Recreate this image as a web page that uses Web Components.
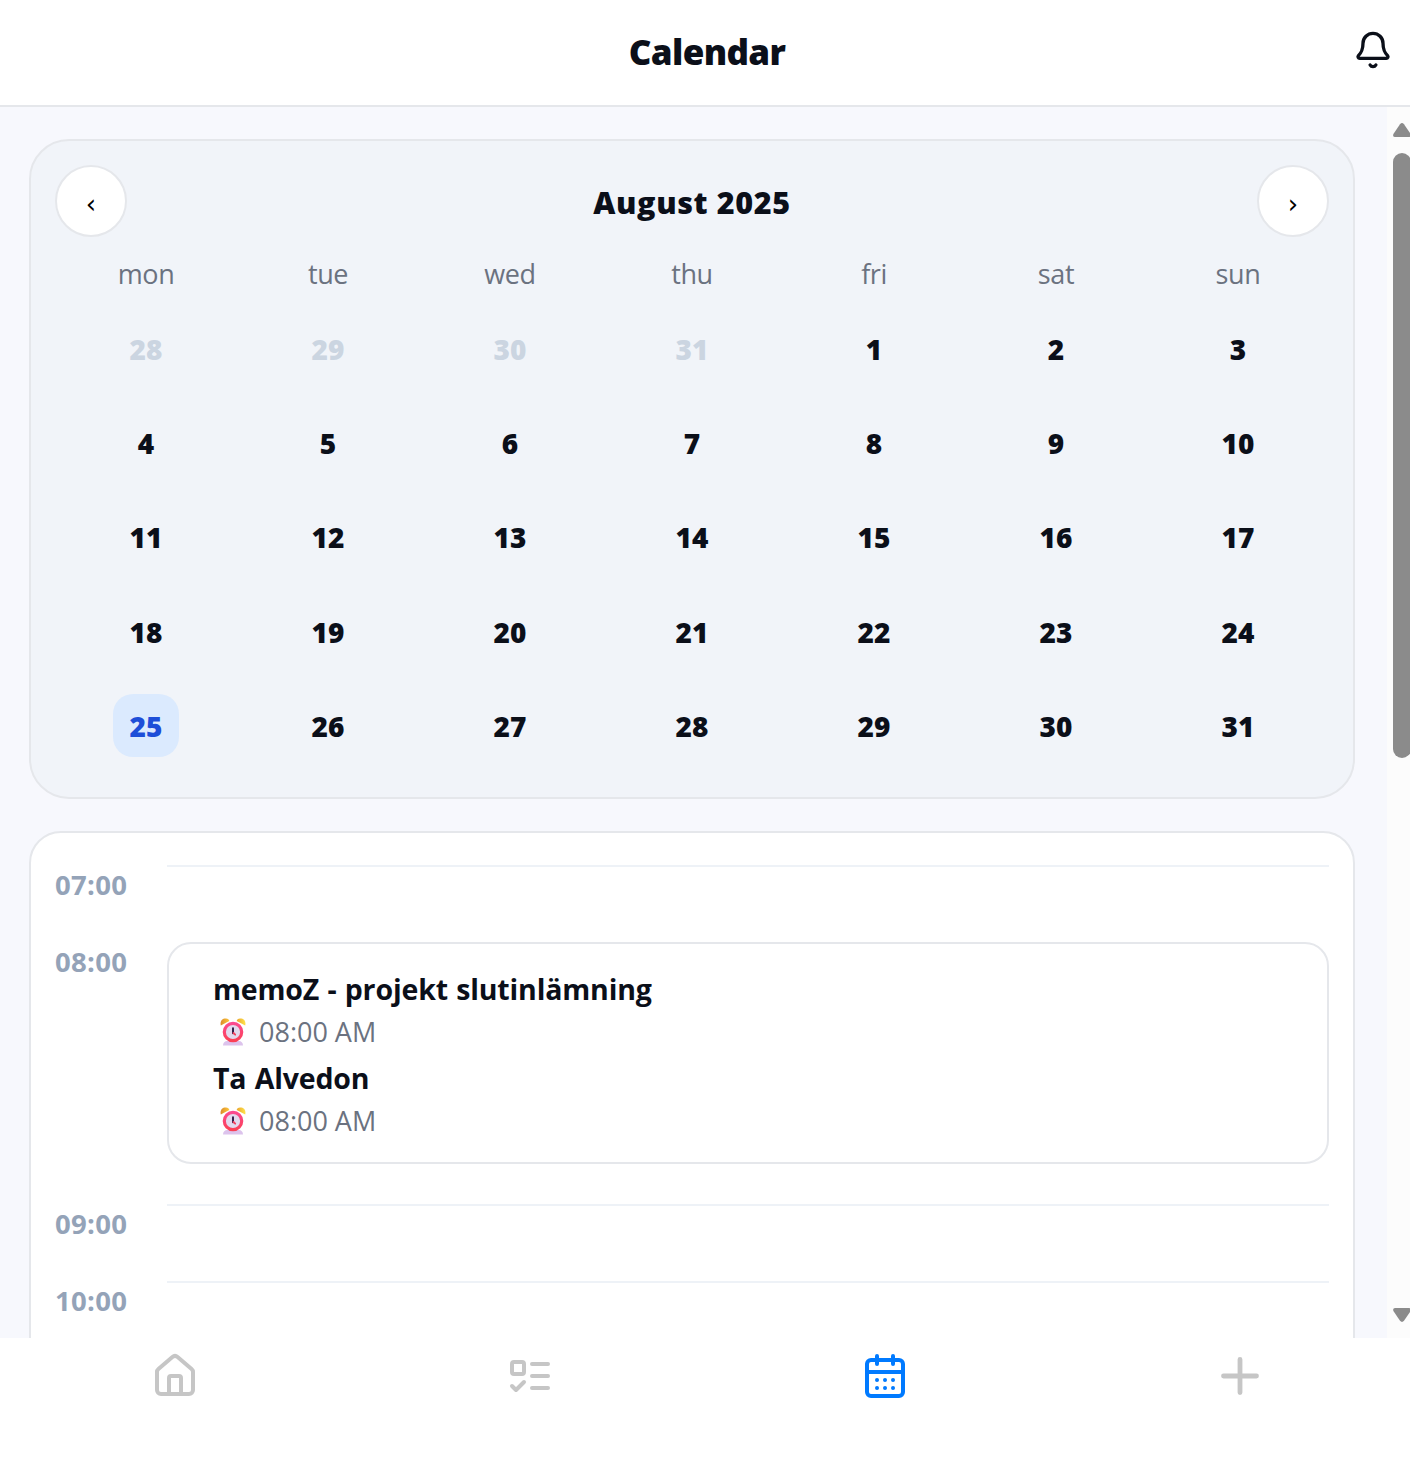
<!DOCTYPE html>
<html lang="en">
<head>
<meta charset="utf-8">
<title>Calendar</title>
<style>
html,body{margin:0;height:100%;overflow:hidden;background:#fff}
body{font-family:"Open Sans","Noto Sans",sans-serif;color:#0b0f19}
</style>
</head>
<body>
<calendar-app></calendar-app>
<script>
const define = (name, html) => customElements.define(name, class extends HTMLElement {
  connectedCallback() {
    if (this.shadowRoot) return;
    const root = this.attachShadow({ mode: 'open' });
    root.innerHTML = typeof html === 'function' ? html(this) : html;
  }
});

const ICONS = {
  bell: '<path d="M10.268 21a2 2 0 0 0 3.464 0"/><path d="M3.262 15.326A1 1 0 0 0 4 17h16a1 1 0 0 0 .74-1.673C19.41 13.956 18 12.499 18 8A6 6 0 0 0 6 8c0 4.499-1.411 5.956-2.738 7.326"/>',
  home: '<path d="M15 21v-8a1 1 0 0 0-1-1h-4a1 1 0 0 0-1 1v8"/><path d="M3 10a2 2 0 0 1 .709-1.528l7-5.999a2 2 0 0 1 2.582 0l7 5.999A2 2 0 0 1 21 10v9a2 2 0 0 1-2 2H5a2 2 0 0 1-2-2z"/>',
  todo: '<rect x="3" y="5" width="6" height="6" rx="1"/><path d="m3 17 2 2 4-4M13 6h8M13 12h8M13 18h8"/>',
  calendar: '<path d="M8 2v4M16 2v4"/><rect x="3" y="4" width="18" height="18" rx="2"/><path d="M3 10h18M8 14h.01M12 14h.01M16 14h.01M8 18h.01M12 18h.01M16 18h.01"/>',
  plus: '<path stroke-width="2.4" d="M12 3.75v16.5M3.75 12h16.5"/>'
};

define('ui-icon', el => `<style>
:host{display:block;width:48px;height:48px}
svg{display:block;width:100%;height:100%}
</style><svg viewBox="0 0 24 24" fill="none" stroke="currentColor" stroke-width="2" stroke-linecap="round" stroke-linejoin="round">${ICONS[el.getAttribute('name')]}</svg>`);

define('alarm-icon', `<style>
:host{display:block;width:26px;height:28px}
svg{display:block}
</style><svg width="26" height="28" viewBox="0 0 26 28">
<defs>
<linearGradient id="a" x1="0" x2="1"><stop offset="0" stop-color="#d98a2b"/><stop offset="1" stop-color="#ffc83a"/></linearGradient>
<linearGradient id="b" x1="0" x2="1"><stop offset="0" stop-color="#e9a52f"/><stop offset="1" stop-color="#ffe34a"/></linearGradient>
<linearGradient id="c" x1="0" y1="0" x2="0" y2="1"><stop offset="0" stop-color="#fb4a8f"/><stop offset="1" stop-color="#fb4056"/></linearGradient>
</defs>
<path d="M3 27.500c0-3 2-4.500 4-4.500h12c2 0 4 1.500 4 4.500z" fill="#dcc3ec"/>
<path d="M.8 7.500C-.3 3 2.500.2 6 .5c2 .2 3 1.300 3.300 2.400z" fill="url(#a)"/>
<path d="M25.200 7.500C26.300 3 23.500.2 20 .5c-2 .2-3 1.300-3.300 2.400z" fill="url(#b)"/>
<circle cx="13" cy="14" r="8.700" fill="#e2d9ee" stroke="url(#c)" stroke-width="3.200"/>
<path d="M13 10.200v5" stroke="#32204b" stroke-width="2" stroke-linecap="round"/>
<path d="m13.500 15 1.700 1.700" stroke="#f4405d" stroke-width="1.800" stroke-linecap="round"/>
</svg>`);

define('app-header', `<style>
:host{display:grid;grid-template-columns:1fr auto 1fr;align-items:center;box-sizing:border-box;height:107px;background:#fff;border-bottom:2px solid #e5e7eb;flex:none}
h1{grid-column:2;margin:0 0 2px;padding-left:4px;font-size:35px;line-height:48px;font-weight:800;letter-spacing:-.65px}
ui-icon{width:40px;height:40px;justify-self:end;margin:0 17px 5px 0}
</style><h1><slot></slot></h1><ui-icon name="bell"></ui-icon>`);

define('round-button', `<style>
:host{display:block}
button{display:flex;align-items:center;justify-content:center;width:72px;height:72px;padding:5px 0 0;border:2px solid #e5e7eb;border-radius:50%;background:#fff;color:#000;font:26px/36px "DejaVu Sans",sans-serif}
</style><button><slot></slot></button>`);

define('day-cell', `<style>
:host{display:flex;justify-content:center;padding:16px 0;height:62.200px}
span{display:flex;align-items:center;justify-content:center;box-sizing:border-box;width:66px;height:63px;border-radius:20px;font-size:28px;line-height:38px;font-weight:800}
:host([muted]){color:#cbd5e1}
:host([selected]) span{background:#dbeafe;color:#1d4ed8}
</style><span><slot></slot></span>`);

define('month-card', el => {
  const days = [28,29,30,31].map(d => `<day-cell muted>${d}</day-cell>`)
    .concat(Array.from({length:31}, (_, i) => `<day-cell${i === 24 ? ' selected' : ''}>${i+1}</day-cell>`));
  return `<style>
:host{display:block;box-sizing:border-box;height:660px;padding:24px;border:2px solid #e5e7eb;border-radius:40px;background:#f1f4f9}
header{display:flex;align-items:center;justify-content:space-between;height:72px}
h2{margin:2px 0 0;font-size:30.500px;line-height:42px;font-weight:800;letter-spacing:.6px}
.grid{display:grid;grid-template-columns:repeat(7,1fr)}
.week{height:64.500px;color:#6b7280;font-size:27px;line-height:39px;text-align:center;letter-spacing:-.4px}
.week span{padding-top:17px}
</style><header><round-button>‹</round-button><h2>August 2025</h2><round-button>›</round-button></header>
<div class="grid week">${['mon','tue','wed','thu','fri','sat','sun'].map(d => `<span>${d}</span>`).join('')}</div>
<div class="grid">${days.join('')}</div>`;
});

define('hour-row', el => `<style>
:host{display:flex;min-height:77px}
time{flex:none;width:112px;box-sizing:border-box;color:#94a3b8;font-size:27.500px;line-height:38px;font-weight:700;padding-top:1px;letter-spacing:.3px}
div{flex:1;border-top:2px solid #eef2f7}
:host([filled]) div{border:0;padding-bottom:40px}
</style><time>${el.getAttribute('hour')}</time><div><slot></slot></div>`);

define('event-box', `<style>
:host{display:block;box-sizing:border-box;height:222px;padding:24px 44px;border:2px solid #e5e7eb;border-radius:24px;background:#fff}
</style><slot></slot>`);

define('event-item', el => `<style>
:host{display:block;height:89px}
h3{margin:0;font-size:28.500px;line-height:43px;font-weight:700;letter-spacing:-.15px;word-spacing:1px}
p{display:flex;align-items:center;margin:0;padding-left:6.500px;gap:13.500px;color:#6b7280;font-size:27px;line-height:42px}
</style><h3><slot></slot></h3><p><alarm-icon></alarm-icon><span>${el.getAttribute('at')}</span></p>`);

define('day-card', `<style>
:host{display:block;box-sizing:border-box;height:620px;padding:32px 24px;border:2px solid #e5e7eb;border-radius:32px;background:#fff}
</style>
<hour-row hour="07:00"></hour-row>
<hour-row hour="08:00" filled><event-box>
<event-item at="08:00 AM">memoZ - projekt slutinlämning</event-item>
<event-item at="08:00 AM">Ta Alvedon</event-item>
</event-box></hour-row>
<hour-row hour="09:00"></hour-row>
<hour-row hour="10:00"></hour-row>`);

define('scroll-rail', `<style>
:host{display:flex;flex-direction:column;align-items:center;flex:none;width:24px;margin-right:-1px;padding:16px 0;box-sizing:border-box;background:#fcfcfc;padding-left:6px}
svg{display:block;flex:none}
i{width:18px;height:605px;margin-top:16px;border-radius:9px;background:#8b8b8b}
.down{margin-top:auto}
</style><svg width="18" height="14" viewBox="0 0 18 14"><path d="M7 1.200Q9-1 11 1.200L17.600 11Q18.500 14 16 14H2Q-.5 14 .4 11Z" fill="#8b8b8b"/></svg><i></i>
<svg class="down" width="18" height="14" viewBox="0 0 18 14"><path d="M7 12.800Q9 15 11 12.800L17.600 3Q18.500 0 16 0H2Q-.5 0 .4 3Z" fill="#8b8b8b"/></svg>`);

define('tab-bar', `<style>
:host{display:flex;flex:none;width:1420px;height:120px;box-sizing:border-box;margin-left:-2.500px;padding-top:14px;background:#fff;color:#c6c6c6}
a{flex:1;display:flex;justify-content:center}
a.on{color:#007aff}
</style><a><ui-icon name="home"></ui-icon></a><a><ui-icon name="todo"></ui-icon></a><a class="on"><ui-icon name="calendar"></ui-icon></a><a><ui-icon name="plus"></ui-icon></a>`);

define('calendar-app', `<style>
:host{display:flex;flex-direction:column;width:1410px;height:1458px;overflow:hidden}
main{display:flex;flex:1;min-height:0;overflow:hidden;background:#f7f8fd}
section{flex:1;display:flex;flex-direction:column;gap:32px;padding:32px 32px 0 29px}
month-card,day-card{flex:none}
</style><app-header>Calendar</app-header>
<main><section><month-card></month-card><day-card></day-card></section><scroll-rail></scroll-rail></main>
<tab-bar></tab-bar>`);
</script>
</body>
</html>
